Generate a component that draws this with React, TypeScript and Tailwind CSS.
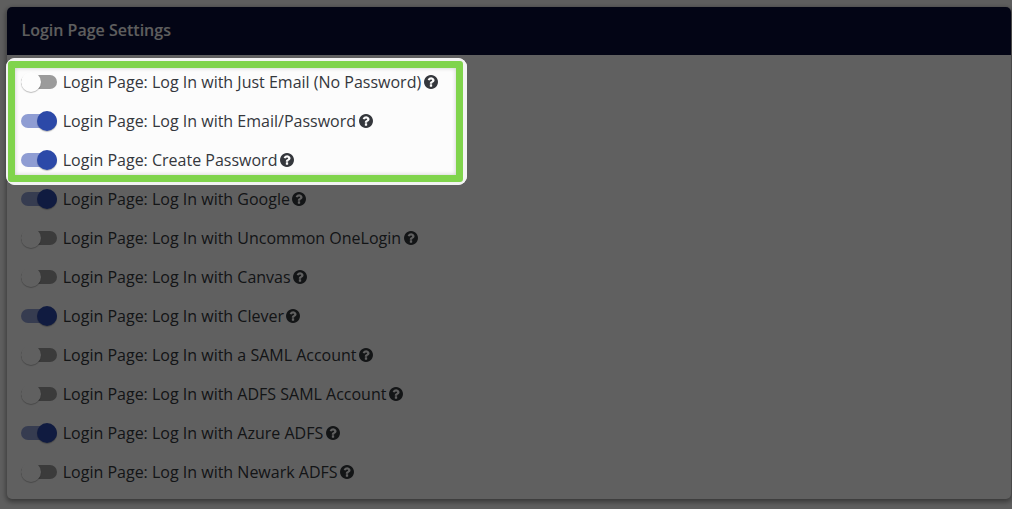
import clsx from 'clsx';

interface LoginSetting {
  label: string;
  enabled: boolean;
}

const settings: LoginSetting[] = [
  { label: 'Login Page: Log In with Just Email (No Password)', enabled: false },
  { label: 'Login Page: Log In with Email/Password', enabled: true },
  { label: 'Login Page: Create Password', enabled: true },
  { label: 'Login Page: Log In with Google', enabled: true },
  { label: 'Login Page: Log In with Uncommon OneLogin', enabled: false },
  { label: 'Login Page: Log In with Canvas', enabled: false },
  { label: 'Login Page: Log In with Clever', enabled: true },
  { label: 'Login Page: Log In with a SAML Account', enabled: false },
  { label: 'Login Page: Log In with ADFS SAML Account', enabled: false },
  { label: 'Login Page: Log In with Azure ADFS', enabled: true },
  { label: 'Login Page: Log In with Newark ADFS', enabled: false },
];

const HelpIcon = () => (
  <svg
    viewBox="128 128 1536 1536"
    fill="currentColor"
    className="ml-[2.5px] h-3.5 w-3.5 shrink-0"
    aria-hidden="true"
  >
    <path d="M1024 1376v-192q0-14-9-23t-23-9h-192q-14 0-23 9t-9 23v192q0 14 9 23t23 9h192q14 0 23-9t9-23zm256-672q0-88-55.500-163t-138.500-116-170-41q-243 0-371 213-15 24 8 42l132 100q7 6 19 6 16 0 25-12 53-68 86-92 34-24 86-24 48 0 85.500 26t37.500 59q0 38-20 61t-68 45q-63 28-115.500 86.500t-52.500 125.500v36q0 14 9 23t23 9h192q14 0 23-9t9-23q0-19 21.500-49.500t54.500-49.500q32-18 49-28.500t46-35 44.500-48 28-60.500 12.500-81zm384 192q0 209-103 385.500t-279.500 279.500-385.500 103-385.500-103-279.500-279.500-103-385.500 103-385.500 279.500-279.500 385.500-103 385.500 103 279.500 279.500 103 385.500z" />
  </svg>
);

const Toggle = ({ enabled }: { enabled: boolean }) => (
  <span
    role="switch"
    aria-checked={enabled}
    className={clsx(
      'flex h-3.5 w-9 shrink-0 items-center rounded-full',
      enabled ? 'justify-end bg-[#8f9dd3]' : 'justify-start bg-[#9b9b9b]'
    )}
  >
    <span
      className={clsx(
        'h-5 w-5 shrink-0 rounded-full shadow-[0_1px_1px_rgba(0,0,0,0.25)]',
        enabled ? 'bg-[#2c49a8]' : 'bg-[#fdfdfd]'
      )}
    />
  </span>
);

const SettingRow = ({ label, enabled }: LoginSetting) => (
  <li className="flex h-[39px] items-center">
    <Toggle enabled={enabled} />
    <span className="ml-[5.5px] whitespace-nowrap">{label}</span>
    <HelpIcon />
  </li>
);

// Green frame over the password options, everything outside it is dimmed
const Spotlight = () => (
  <div className="pointer-events-none absolute top-[58px] left-[6px] h-[127px] w-[461px] rounded-[9px] border-t-[3px] border-r-4 border-b-[3px] border-l-2 border-[#f3f3f3] shadow-[0_0_0_2000px_rgba(0,0,0,0.62)]">
    <div className="h-full w-full rounded-[3px] border-[7px] border-[#80d44c] shadow-[inset_0_0_4px_rgba(0,0,0,0.2)]" />
  </div>
);

export default function App() {
  return (
    <main className="relative h-[509px] w-[1012px] overflow-hidden bg-[#f7f7f7] pt-[7px] pr-px pl-[6.5px] font-['Open_Sans',sans-serif] text-[#34373c]">
      <section className="h-[492px] rounded-[5px] bg-[#fcfcfc] shadow-[0_2px_5px_1px_rgba(0,0,0,0.4)]">
        <header className="flex h-12 items-center rounded-t-[5px] bg-[#0a0f38] px-[15px] pb-0.5">
          <h1 className="text-base font-semibold text-[#f6f6f6]">
            Login Page Settings
          </h1>
        </header>

        <ul className="px-[14.75px] pt-[7.5px] text-base">
          {settings.map((setting) => (
            <SettingRow key={setting.label} {...setting} />
          ))}
        </ul>
      </section>

      <Spotlight />
    </main>
  );
}
